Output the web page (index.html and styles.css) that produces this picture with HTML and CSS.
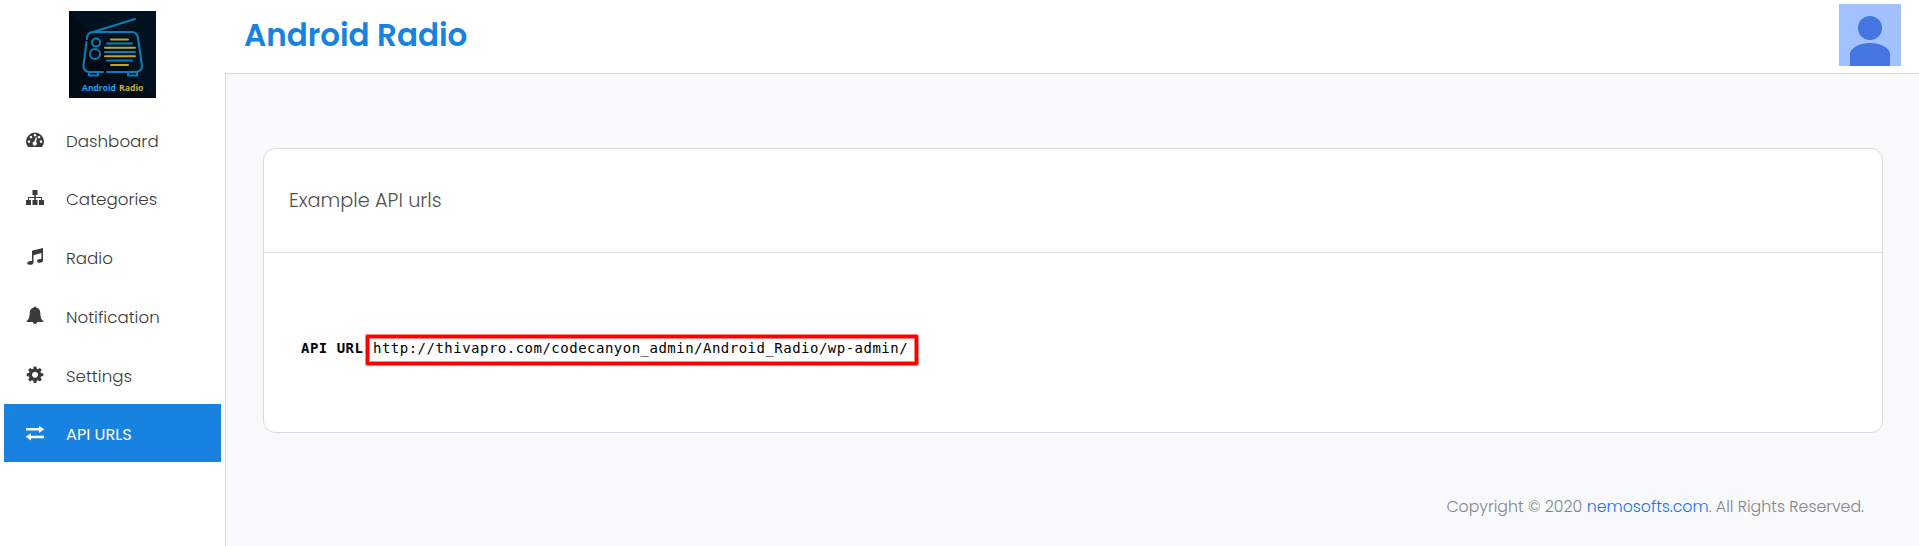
FILE: index.html
```html
<!DOCTYPE html>
<html lang="en">
<head>
<meta charset="utf-8">
<title>Android Radio</title>
<link rel="stylesheet" href="styles.css">
</head>
<body>
<div class="app">
  <aside class="sidebar">
    <svg class="logo" viewBox="0 0 87 87">
      <rect width="87" height="87" fill="#010b16"/>
      <path d="M0 0H87V87Z" fill="#00121f"/>
      <g fill="none" stroke="#087fb5" stroke-width="2" stroke-linecap="round" stroke-linejoin="round">
        <path d="M24 21 66 8M18 28Q18 21 24 21H63Q68 21 69 27L73 55Q73 60 67 61H38M34 61H20Q14 60 14.500 54L17.500 31"/>
        <path d="M20 62V64.500H29V62M59 62V64.500H68V62"/>
        <circle cx="27" cy="31.500" r="4"/><circle cx="26" cy="43" r="5"/>
        <path d="M38 32.500H63M36 41H66M38 49.500H63"/>
        <path stroke="#bba52b" d="M42 28.500H59M36 36.700H66M36 45.300H66M42 54H59"/>
      </g>
      <text class="logo-text" x="13" y="79.500" textLength="34" lengthAdjust="spacingAndGlyphs" fill="#11a3f0">Android</text>
      <text class="logo-text" x="50" y="79.500" textLength="24.500" lengthAdjust="spacingAndGlyphs" fill="#c2ae3d">Radio</text>
    </svg>
    <nav class="menu">
      <a class="item"><svg class="icon" viewBox="0 0 20 20"><path fill-rule="evenodd" d="M3 17Q1 14.500 1 11.500A9 9 0 0 1 19 11.500Q19 14.500 17 17ZM4 10.300a1.300 1.300 0 1 0 .01 0ZM6 5.800a1.300 1.300 0 1 0 .01 0ZM10 3.800a1.300 1.300 0 1 0 .01 0ZM14 5.800a1.300 1.300 0 1 0 .01 0ZM16 10.300a1.300 1.300 0 1 0 .01 0ZM10.700 7.300 9.500 11.500A2 2 0 1 0 11 12L12 7.700Z"/></svg><span>Dashboard</span></a>
      <a class="item"><svg class="icon" viewBox="0 0 20 20"><path d="M7.500 2h5v5h-1.700v2H17v3h2v5h-5v-5h2v-2h-5.200v2h1.700v5h-5v-5h1.700v-2H4v2h2v5H1v-5h2V9h6.200V7H7.500Z"/></svg><span>Categories</span></a>
      <a class="item"><svg class="icon" viewBox="0 0 20 20"><path d="M7 3.700 18 1v12.500c0 1.300-1.300 2.300-3.300 2.300S12 15 12 14s1.300-2 3-2c.6 0 1 .1 1.400.2V6L8.500 8.300v7.200c0 1.400-1.400 2.300-3.400 2.300S2.300 17 2.300 16s1.300-2 3-2c.6 0 1.200.1 1.700.3Z"/></svg><span>Radio</span></a>
      <a class="item"><svg class="icon" viewBox="0 0 20 20"><path d="M9 1.500C9 .3 11 .3 11 1.500c3 .6 4.300 2.800 4.300 5.500 0 4 .9 6.600 3 8v1h-6.200a2.100 2.100 0 0 1-4.200 0H1.700v-1c2.100-1.400 3-4 3-8C4.700 4.300 6 2.100 9 1.500Z"/></svg><span>Notification</span></a>
      <a class="item"><svg class="icon" viewBox="0 0 20 20"><path fill-rule="evenodd" d="m8.700 1.500h2.600l.4 2.200 1.300.6 1.900-1.300 1.900 1.900-1.300 1.900.5 1.200 2.300.4V11l-2.300.5-.5 1.200 1.300 1.900-1.900 1.900-1.900-1.300-1.300.6-.4 2.200H8.700l-.4-2.200-1.300-.6-1.900 1.300-1.900-1.900 1.300-1.900-.5-1.200-2.300-.5V8.400L4 8l.5-1.200-1.300-1.900L5.100 3 7 4.300l1.300-.6ZM10 6.700a3 3 0 1 0 .01 0Z"/></svg><span>Settings</span></a>
      <a class="item active"><svg class="icon" viewBox="0 0 20 20"><path d="M1 5h13V2.700L19.300 6.300 14 10V7.500H1ZM19 15.300H6V17.500L.7 13.800 6 10.200v2.500h13Z"/></svg><span>API URLS</span></a>
    </nav>
  </aside>
  <div class="main">
    <header class="header">
      <h1 class="title">Android Radio</h1>
      <svg class="avatar" viewBox="0 0 62 62"><rect width="62" height="62" fill="#a1c2fe"/><circle cx="31" cy="24" r="12" fill="#4475e1"/><path d="M11 62V49C13 43 21 39 31 39S49 43 51 49V62Z" fill="#4475e1"/></svg>
    </header>
    <main class="content">
      <section class="card">
        <div class="card-head">Example API urls</div>
        <div class="card-body"><b class="label">API URL</b><code class="url">http://thivapro.com/codecanyon_admin/Android_Radio/wp-admin/</code></div>
      </section>
      <footer class="footer">Copyright © 2020 <a class="link">nemosofts.com</a>. All Rights Reserved.</footer>
    </main>
  </div>
</div>
</body>
</html>
```
FILE: styles.css
```css
* { box-sizing: border-box; }
body { margin: 0; font-family: Poppins, Inter, sans-serif; background: #fff; }
.app { display: flex; height: 546px; overflow: hidden; }
.sidebar { width: 225px; flex: none; }
.logo { display: block; width: 87px; height: 87px; margin: 11px 0 0 69px; }
.logo-text { font: 700 8.5px "Open Sans", sans-serif; }
.menu { display: flex; flex-direction: column; gap: .8px; margin: 12px 4px 0; }
.item { display: flex; align-items: center; height: 58px; padding: 3px 0 0 21px; color: #3a3a3a; font-size: 16.7px; font-weight: 300; }
.icon { width: 20px; height: 20px; margin-right: 21px; flex: none; fill: currentColor; position: relative; top: -1px; }
.active { background: #1782df; color: #fff; font-size: 16.2px; font-weight: 400; }
.main { flex: 1; display: flex; flex-direction: column; }
.header { display: flex; justify-content: space-between; height: 73px; padding: 4px 18px 0 19px; }
.title { margin: 0; font-size: 31px; line-height: 62px; font-weight: 600; color: #1782df; }
.avatar { width: 62px; height: 62px; }
.content { flex: 1; background: #f8f9fb; border: solid #d8dbde; border-width: 1px 0 0 1px; padding: 74px 36px 0 37px; }
.card { height: 285px; background: #fff; border: 1px solid #d8dbde; border-radius: 12px; }
.card-head { height: 104px; padding-left: 25px; border-bottom: 1px solid #dfe2e4; line-height: 103px; font-size: 19.300px; font-weight: 300; color: #505050; }
.card-body { display: flex; align-items: flex-start; padding: 82px 0 0 37px; font: 14px/25px "DejaVu Sans Mono", monospace; letter-spacing: .49px; color: #000; }
.label { width: 65px; white-space: nowrap; line-height: 27px; }
.url { font: inherit; height: 30px; width: 552px; padding-left: 4px; border: 3px solid #f00; border-radius: 1px; box-shadow: 0 0 0 1px #ff000080, inset 0 0 0 1px #ff000080; line-height: 21px; }
.footer { margin: 60px 19px 0 0; text-align: right; font-size: 15.800px; line-height: 28px; font-weight: 300; color: #858585; }
.link { color: #1a73e8; }
```
